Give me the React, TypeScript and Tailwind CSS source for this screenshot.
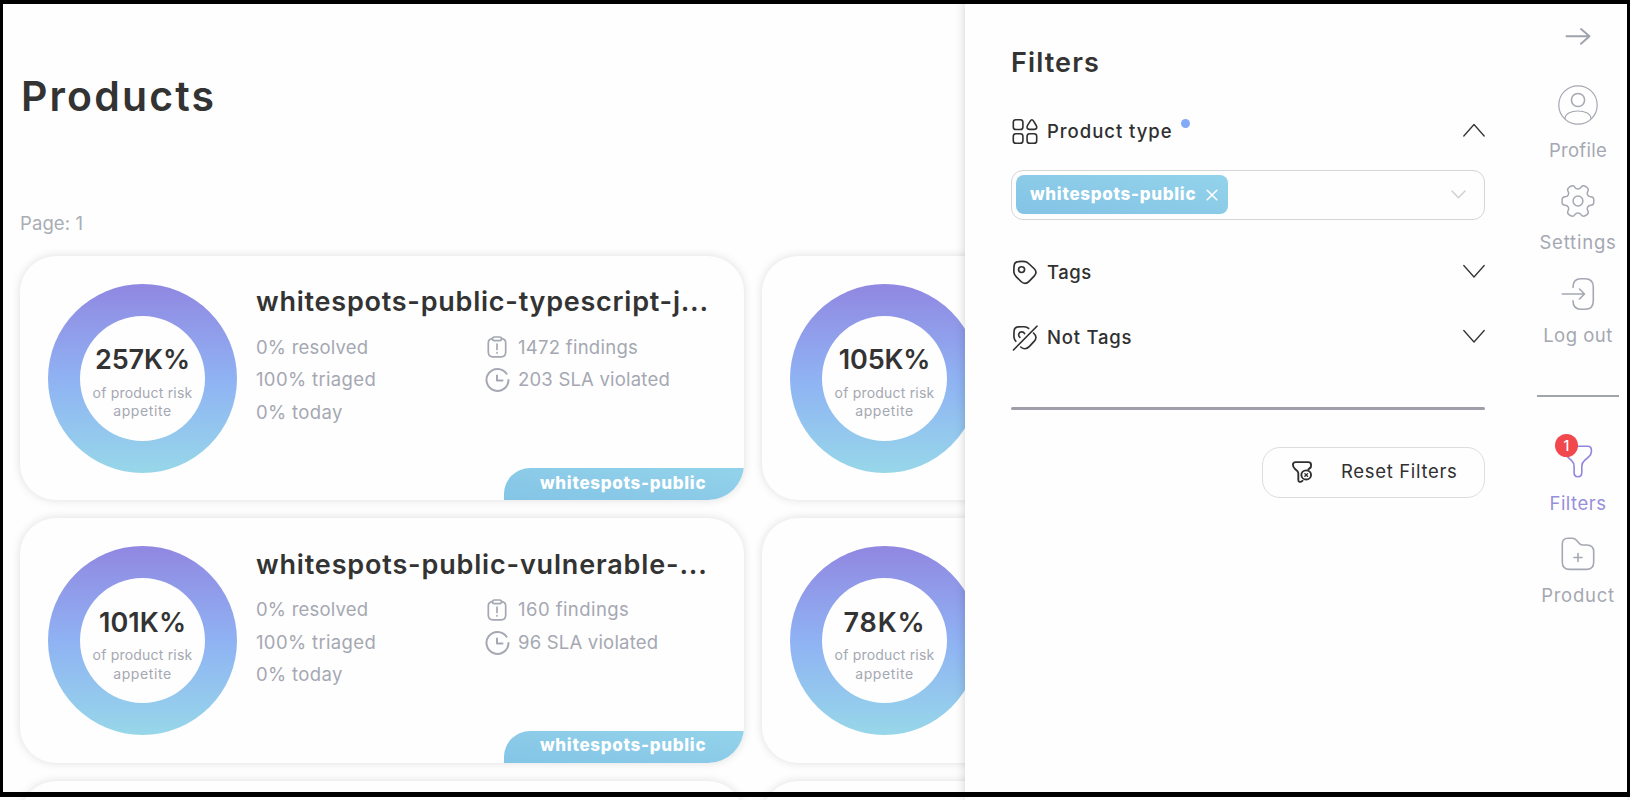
import type { ReactNode } from 'react';

type Product = {
  risk?: string;
  riskClass?: string;
  details?: {
    name: string;
    titleClass: string;
    findings: string;
    findingsClass: string;
    sla: string;
  };
};

const products: Product[] = [
  {
    risk: '257K%',
    riskClass: 'tracking-[-0.100px]',
    details: { name: 'whitespots-public-typescript-j...', titleClass: 'tracking-[0.760px]', findings: '1472 findings', findingsClass: 'tracking-[0.270px]', sla: '203 SLA violated' },
  },
  { risk: '105K%', riskClass: 'tracking-[-0.200px]' },
  {
    risk: '101K%',
    riskClass: 'tracking-[0.100px]',
    details: { name: 'whitespots-public-vulnerable-...', titleClass: 'tracking-[0.830px]', findings: '160 findings', findingsClass: 'tracking-[0.440px]', sla: '96 SLA violated' },
  },
  { risk: '78K%', riskClass: 'tracking-[0.800px]' },
  {},
  {},
];

function ClipboardIcon() {
  return (
    <svg width="20" height="22" viewBox="0 0 20 22" fill="none" stroke="currentColor" strokeWidth="1.700" strokeLinecap="round" strokeLinejoin="round">
      <path d="M5.500 2.600C2.600 2.800 1.300 3.800 1.300 7v9c0 3.600 1.200 4.800 4.500 4.800h8.400c3.300 0 4.500-1.200 4.500-4.800V7c0-3.200-1.300-4.200-4.200-4.400" />
      <path d="M7.300 1h5.400c1.200 0 1.900.6 1.900 1.700s-.7 1.900-1.900 1.900H7.300c-1.200 0-1.900-.8-1.900-1.900S6.100 1 7.300 1zM10 8.200v5.300M10 16.700v.3" />
    </svg>
  );
}

function ClockIcon() {
  return (
    <svg width="25" height="25" viewBox="0 0 25 25" fill="none" stroke="currentColor" strokeWidth="2" strokeLinecap="round" strokeLinejoin="round">
      <path d="M21.600 6.700A11 11 0 1 0 23.500 13" />
      <path d="M12 8.500V13.500h5.500" />
    </svg>
  );
}

function Donut({ value, valueClass }: { value: string; valueClass?: string }) {
  return (
    <div className="flex size-[189px] shrink-0 items-center justify-center rounded-full bg-linear-to-b from-[#9087e1] via-[#8fb2f3] to-[#97d7e9]">
      <div className="flex size-[125px] flex-col items-center rounded-full bg-[#fefefe] pt-[26.500px] whitespace-nowrap">
        <span className={`text-[27px] leading-9 font-semibold text-[#333] ${valueClass}`}>{value}</span>
        <span className="mt-[5.500px] text-[14px] leading-[18.700px] tracking-[0.200px]">of product risk</span>
        <span className="text-[14px] leading-[18.700px] tracking-[0.600px]">appetite</span>
      </div>
    </div>
  );
}

function ProductCard({ p }: { p: Product }) {
  return (
    <article className="relative flex h-[244.500px] overflow-hidden rounded-[36px] bg-[#fefefe] pt-7 pl-7 text-[#a5a8b2] shadow-[0_0_10px_rgba(0,0,0,0.13)]">
      {p.risk && <Donut value={p.risk} valueClass={p.riskClass} />}
      {p.details && (
        <>
          <div className="ml-[19px] pt-[0.900px] whitespace-nowrap">
            <h2 className={`text-[27px] leading-9 font-semibold text-[#333] ${p.details.titleClass}`}>{p.details.name}</h2>
            <div className="mt-[10.500px] flex text-[18.500px] leading-[32.500px]">
              <div className="w-[228px]">
                <p className="tracking-[0.200px]">0% resolved</p>
                <p className="tracking-[0.350px]">100% triaged</p>
                <p className="tracking-[0.350px]">0% today</p>
              </div>
              <div>
                <div className="flex items-center gap-2">
                  <span className="flex w-[26px] justify-center"><ClipboardIcon /></span>
                  <span className={p.details.findingsClass}>{p.details.findings}</span>
                </div>
                <div className="flex items-center gap-2">
                  <span className="flex w-[26px] justify-center"><ClockIcon /></span>
                  <span className="tracking-[0.200px]">{p.details.sla}</span>
                </div>
              </div>
            </div>
          </div>
          <div className="absolute right-0 bottom-0 flex h-8 w-[240px] items-center rounded-tl-[26px] bg-linear-to-bl from-[#93d3ea] to-[#84c4e6] pb-px pl-9 text-[17px] font-extrabold tracking-[0.700px] text-white">
            whitespots-public
          </div>
        </>
      )}
    </article>
  );
}

function Chevron({ up = false }: { up?: boolean }) {
  return (
    <svg className="mb-[3px] ml-auto" width="22" height="14" viewBox="0 0 22 14" fill="none" stroke="#333" strokeWidth="1.300" strokeLinecap="round" strokeLinejoin="round">
      <path d={up ? 'M.8 13 11 1.500 21.200 13' : 'M.8 1.500 11 13 21.200 1.500'} />
    </svg>
  );
}

function FilterRow({ icon, label, className, children }: { icon: ReactNode; label: string; className: string; children?: ReactNode }) {
  return (
    <div className="flex h-[30px] items-center text-[#303030]">
      <span className="w-9 pl-px">{icon}</span>
      <span className={`text-[18.500px] font-medium ${className}`}>{label}</span>
      {children}
    </div>
  );
}

function NavItem({ icon, label, className = '' }: { icon: ReactNode; label: string; className?: string }) {
  return (
    <div className="flex flex-col items-center">
      <span className="flex h-12 items-center justify-center">{icon}</span>
      <span className={`mt-[5px] text-[18.500px] leading-6 whitespace-nowrap ${className}`}>{label}</span>
    </div>
  );
}

function FiltersPanel() {
  return (
    <section className="ml-[46px] w-[474px] pt-[45px]">
      <h2 className="text-[27px] leading-9 font-semibold tracking-[1.100px] text-[#333]">Filters</h2>
      <div className="mt-[35.500px]">
        <FilterRow
          label="Product type"
          className="tracking-[0.970px]"
          icon={
            <svg width="27" height="27" viewBox="0 0 27 27" fill="none" stroke="currentColor" strokeWidth="1.600" strokeLinejoin="round">
              <rect x="1.300" y="1.700" width="9.600" height="9.800" rx="2.600" />
              <rect x="1.300" y="15.700" width="9.600" height="9.600" rx="2.600" />
              <rect x="15.100" y="15.700" width="9.600" height="9.600" rx="2.600" />
              <path d="M18.400 2.900c.9-1.500 2.100-1.500 3 0l2.700 4.300c1.400 2.300.6 4.200-1.700 4.200h-5c-2.300 0-3.100-1.900-1.700-4.200z" />
            </svg>
          }
        >
          <span className="mb-[17px] ml-[8px] size-[9px] rounded-full bg-[#83aaf7]" />
          <Chevron up />
        </FilterRow>
      </div>
      <div className="mt-[23.500px] flex h-[50px] items-center rounded-xl border border-[#d3d5d9] pr-[18px] pb-px pl-1">
        <div className="flex h-[39px] items-center rounded-lg bg-linear-to-tr from-[#84c3e5] to-[#93d3ea] pr-[10px] pl-[14px] text-white">
          <span className="text-[17px] font-extrabold tracking-[0.700px]">whitespots-public</span>
          <svg className="ml-[10px]" width="12" height="12" viewBox="0 0 12 12" fill="none" stroke="currentColor" strokeWidth="1.500" strokeLinecap="round">
            <path d="m1.200 1.200 9.600 9.600M10.800 1.200l-9.600 9.600" />
          </svg>
        </div>
        <svg className="ml-auto" width="15" height="9" viewBox="0 0 15 9" fill="none" stroke="#cfcfd3" strokeWidth="1.400" strokeLinecap="round" strokeLinejoin="round">
          <path d="m1 1 6.500 6.800L14 1" />
        </svg>
      </div>
      <div className="mt-[37.500px]">
        <FilterRow
          label="Tags"
          className="tracking-[0.550px]"
          icon={
            <svg width="26" height="25" viewBox="0 0 25 25" preserveAspectRatio="none" fill="none" stroke="currentColor" strokeWidth="1.600" strokeLinejoin="round">
              <path d="M2 6.200C2.100 3.100 3.200 1.800 6.200 1.600c2.100-.2 4.300-.3 6.400 0 1.600.2 2.500 1 3.600 2.100l5.200 5.100c2.100 2.200 2.100 4.800.1 7.100l-5.100 5.500c-2.500 2.600-5.200 2.600-7.700.1l-4.300-4.400C2.800 15.400 2.100 14.400 1.900 12.600c-.2-2.100-.1-4.300.1-6.400z" />
              <circle cx="9.200" cy="9.600" r="2.900" />
            </svg>
          }
        >
          <Chevron />
        </FilterRow>
      </div>
      <div className="mt-[35px]">
        <FilterRow
          label="Not Tags"
          className="tracking-[0.780px]"
          icon={
            <svg width="27" height="26" viewBox="0 0 26 26" preserveAspectRatio="none" fill="none" stroke="currentColor" strokeWidth="1.600" strokeLinecap="round" strokeLinejoin="round">
              <path d="M1.400 25 24 1.200M16 3.400c-1.400-1.200-2.500-1.500-4.200-1.600-2-.1-3.900-.1-5.900.1C3.200 2.200 2.100 3.500 2 6.300c-.1 2.100-.3 4.400 0 6.400.2 1.400.6 2.500 1.700 3.600M20.700 8c2.800 2.600 3.200 5.600.6 8.400l-4.500 5c-2.600 2.800-5.600 3-8.400.6M7.600 12.300c-2.300-2.100-.9-5.400 1.800-5.400 1.300 0 2.200.6 2.700 1.700" />
            </svg>
          }
        >
          <Chevron />
        </FilterRow>
      </div>
      <hr className="mt-[54px] h-[3px] rounded-full border-0 bg-[#9f9fac]" />
      <button className="mt-[37px] ml-auto flex h-[51px] w-[223px] items-center rounded-[18px] border border-[#dcdde0] pl-[29px] text-[18.500px] tracking-[0.670px] text-[#303030]">
        <svg width="20" height="22" viewBox="0 0 19 22" preserveAspectRatio="none" fill="none" stroke="currentColor" strokeWidth="1.800" strokeLinecap="round" strokeLinejoin="round">
          <path d="M17.600 6.500c.4-.7.500-1.500.5-2.600 0-2-.6-2.700-2.600-2.700h-12C1.600 1.200.9 1.900.9 3.700c0 2 .4 2.900 2 4.300l2 1.900c.9.900 1.100 1.500 1.100 2.700v6.200c0 2.100 1.300 2.700 3 1.600l1-.6" />
          <path d="M17.600 6.500 15.500 8.500" />
          <circle cx="13.500" cy="13.900" r="4.600" />
          <path d="m12.200 12.600 2.600 2.600m0-2.600-2.600 2.600" strokeWidth="1.300" />
        </svg>
        <span className="ml-[29px]">Reset Filters</span>
      </button>
    </section>
  );
}

function Sidebar() {
  return (
    <nav className="ml-auto flex w-[98px] flex-col items-center pt-7 text-[#a5a8b2]">
      <svg width="26" height="17" viewBox="0 0 26 17" fill="none" stroke="#a0a3ad" strokeWidth="1.900" strokeLinecap="round" strokeLinejoin="round">
        <path d="M1.500 8.300h23M16 1l8.500 7.300L16 15.800" />
      </svg>
      <div className="mt-10 flex flex-col gap-[15.300px]">
        <NavItem
          label="Profile"
          className="tracking-[0.270px]"
          icon={
            <svg className="mb-2" width="40" height="40" viewBox="0 0 40 40" fill="none" stroke="currentColor" strokeWidth="1.200">
              <circle cx="20" cy="20" r="19.200" />
              <circle cx="20" cy="15" r="6.600" strokeWidth="1.500" />
              <path d="M7 34c0-5.200 6-8 13-8s13 2.800 13 8" />
            </svg>
          }
        />
        <NavItem
          label="Settings"
          className="tracking-[0.800px]"
          icon={
            <svg width="34" height="34" viewBox="0 0 34 34" fill="none" stroke="currentColor" strokeWidth="1.500" strokeLinejoin="round">
              <path d="M9.300 2.500c2.100-1.300 3.600-.9 4.600.8 1.400 2.300 4.700 2.300 6.100 0 1-1.700 2.600-2.100 4.600-.8l1 .6c1.800 1.100 2.100 2.700 1.100 4.500-1.200 2.300.3 5.100 3 5.200 2 .1 3.100 1.200 3.100 3v2.400c0 1.800-1.100 2.900-3.100 3-2.700.1-4.200 2.900-3 5.200 1 1.800.7 3.400-1.100 4.500l-1 .6c-2 1.200-3.600.8-4.600-.9-1.400-2.200-4.700-2.200-6.100 0-1 1.700-2.500 2.100-4.600.9l-1-.6c-1.800-1.100-2.100-2.700-1.100-4.500 1.200-2.300-.3-5.100-3-5.200-2-.1-3.100-1.200-3.100-3v-2.400c0-1.800 1.100-2.900 3.100-3 2.700-.1 4.200-2.900 3-5.200-1-1.800-.7-3.400 1.100-4.500z" />
              <circle cx="17" cy="17" r="4.900" />
            </svg>
          }
        />
        <NavItem
          label="Log out"
          className="tracking-[0.500px]"
          icon={
            <svg width="34" height="34" viewBox="0 0 34 34" fill="none" stroke="currentColor" strokeWidth="1.600" strokeLinecap="round" strokeLinejoin="round">
              <path d="M12 10.500C12 4.500 14.500 1.800 20 1.800h4c5.500 0 8.300 2.800 8.300 8.300v13.800c0 5.500-2.800 8.300-8.300 8.300h-4c-5.500 0-8-2.700-8-8.400" />
              <path d="M1.300 17h21.500M18.500 12l5 5-5 5" />
            </svg>
          }
        />
      </div>
      <hr className="mt-[48.500px] h-[2px] w-[82px] border-0 bg-[#a1a5a9]" />
      <div className="mt-[40.500px] flex flex-col gap-[15.500px]">
        <NavItem
          label="Filters"
          className="tracking-[0.500px] text-[#988fdb]"
          icon={
            <span className="relative block">
              <svg width="30" height="33" viewBox="0 0 30 33" fill="none" stroke="#9086dc" strokeWidth="1.600" strokeLinejoin="round">
                <path d="M4.500 1.300h20.200c2.500 0 3.700 1.200 3.700 3.700v1.600c0 2.200-1 3.800-2.500 5.100l-4.500 4c-2 1.700-2.600 3.200-2.600 5.600v6.200c0 2.600-1.300 4.200-3.800 4.200s-3.900-1.600-3.900-4.200v-6.200c0-2.400-.6-3.900-2.500-5.600l-4.300-4C2.500 10.200 1 8.600 1 6.400" />
              </svg>
              <span className="absolute -top-[11px] -left-[8px] flex size-[23px] items-center justify-center rounded-full bg-[#f0484d] text-[14px] font-medium text-white">1</span>
            </span>
          }
        />
        <NavItem
          label="Product"
          className="tracking-[0.750px]"
          icon={
            <svg width="34" height="34" viewBox="0 0 34 34" fill="none" stroke="currentColor" strokeWidth="1.600" strokeLinecap="round" strokeLinejoin="round">
              <path d="M1.300 7c0-3.900 1.800-5.700 5.700-5.700h4c2 0 3.400.6 4.700 2.100l2.200 2.700c1.100 1.400 2 1.900 3.800 1.900h4.200c4.700 0 6.800 2.100 6.800 6.800V25c0 5-2.400 7.400-7.400 7.400H8.700c-5 0-7.400-2.400-7.400-7.400z" />
              <path d="M17 16.500v8M13 20.500h8" />
            </svg>
          }
        />
      </div>
    </nav>
  );
}

export default function App() {
  return (
    <div className="relative flex h-[800px] w-[1630px] overflow-hidden bg-[#fefefe] font-[Inter,sans-serif]">
      <main className="w-[965px] shrink-0 overflow-hidden pt-[72px] pl-5">
        <h1 className="pl-px text-[41px] leading-12 font-semibold tracking-[2.150px] text-[#333]">Products</h1>
        <p className="mt-[88.500px] text-[18.500px] leading-7 tracking-[0.100px] text-[#a9adb4]">Page: 1</p>
        <div className="mt-[19px] grid w-[1466px] grid-cols-2 gap-x-[18px] gap-y-[18px]">
          {products.map((p, i) => (
            <ProductCard key={i} p={p} />
          ))}
        </div>
      </main>
      <aside className="relative flex w-[662px] shrink-0 bg-[#fefefe] shadow-[0_0_10px_rgba(0,0,0,0.18)]">
        <FiltersPanel />
        <Sidebar />
      </aside>
      <div className="pointer-events-none absolute inset-x-0 top-0 h-[797px] border-x-[3px] border-t-4 border-b-[5px] border-black" />
    </div>
  );
}
